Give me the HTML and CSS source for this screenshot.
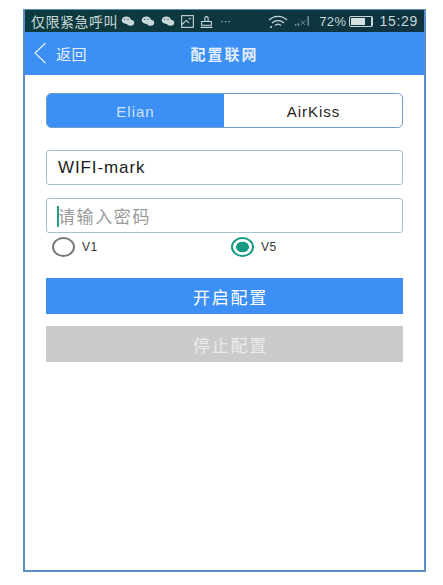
FILE: index.html
```html
<!DOCTYPE html>
<html lang="zh-CN">
<head>
    <meta charset="utf-8">
    <title>配置联网</title>
    <link rel="stylesheet" href="styles.css">
</head>
<body>
    <div class="phone">
        <div class="status-bar">
            <span class="carrier">仅限紧急呼叫</span>
            <div class="notify-icons">
                <svg class="wechat" viewBox="0 0 16 12"><ellipse cx="6" cy="5" rx="5.5" ry="4.5"/><ellipse cx="11" cy="8" rx="4.5" ry="3.6"/><circle cx="4" cy="4" r=".8" class="hole"/><circle cx="8" cy="4" r=".8" class="hole"/></svg>
                <svg class="wechat" viewBox="0 0 16 12"><ellipse cx="6" cy="5" rx="5.5" ry="4.5"/><ellipse cx="11" cy="8" rx="4.5" ry="3.6"/><circle cx="4" cy="4" r=".8" class="hole"/><circle cx="8" cy="4" r=".8" class="hole"/></svg>
                <svg class="wechat" viewBox="0 0 16 12"><ellipse cx="6" cy="5" rx="5.5" ry="4.5"/><ellipse cx="11" cy="8" rx="4.5" ry="3.6"/><circle cx="4" cy="4" r=".8" class="hole"/><circle cx="8" cy="4" r=".8" class="hole"/></svg>
                <svg class="line-icon" viewBox="0 0 12 12"><rect x=".6" y=".6" width="10.8" height="10.8"/><path d="M.6 9 5 5l2.5 2.5M7 3.5h2.5"/></svg>
                <svg class="line-icon" viewBox="0 0 12 12"><path d="M4.5 6V3a1.5 1.5 0 0 1 3 0v3M1.5 6h9v3.5h-9zM.5 11.4h11"/></svg>
                <span class="dots">···</span>
            </div>
            <div class="system-icons">
                <svg class="wifi" viewBox="0 0 20 13"><path d="M1 5a13 13 0 0 1 18 0M4 8a9 9 0 0 1 12 0M7 10.5a4.5 4.5 0 0 1 6 0"/><circle cx="3" cy="12" r="1"/></svg>
                <svg class="signal" viewBox="0 0 18 11"><rect x="0" y="9" width="1.6" height="2"/><rect x="3" y="8" width="1.6" height="3"/><path d="m6.5 5 5 5m0-5-5 5"/><rect x="14" y="0" width="1.6" height="11"/></svg>
                <span class="battery-text">72%</span>
                <div class="battery"><div class="battery-fill"></div></div>
                <span class="clock">15:29</span>
            </div>
        </div>

        <div class="app-bar">
            <div class="back">
                <svg class="back-arrow" viewBox="0 0 14 22"><path d="M12.5 1 2 11l10.5 10"/></svg>
                <span>返回</span>
            </div>
            <h1>配置联网</h1>
        </div>

        <div class="content">
            <div class="tabs">
                <div class="tab active">Elian</div>
                <div class="tab">AirKiss</div>
            </div>

            <div class="field ssid">WIFI-mark</div>
            <div class="field password"><span class="cursor"></span>请输入密码</div>

            <div class="versions">
                <label class="radio"><span class="circle"></span>V1</label>
                <label class="radio checked"><span class="circle"></span>V5</label>
            </div>

            <button class="btn start-btn">开启配置</button>
            <button class="btn stop-btn">停止配置</button>
        </div>
    </div>
</body>
</html>
```

FILE: styles.css
```css
* {
    box-sizing: border-box;
    margin: 0;
    padding: 0;
}

body {
    font-family: "Liberation Sans", "Noto Sans CJK SC", sans-serif;
    background: #fff;
    padding: 9px 0 0 23px;
}

.phone {
    width: 403px;
    height: 563px;
    border: 2px solid #5b8cc6;
    border-top-width: 1px;
    display: flex;
    flex-direction: column;
    background: #fff;
}

.status-bar {
    height: 22px;
    background: linear-gradient(90deg, #0c3b3f 0%, #0f3340 100%);
    color: #c9d8d8;
    font-size: 14px;
    display: flex;
    align-items: center;
    padding: 0 6px;
}

.carrier {
    width: 90px;
    letter-spacing: .5px;
    white-space: nowrap;
}

.notify-icons {
    display: flex;
    align-items: center;
    gap: 6px;
}

.wechat {
    width: 14px;
    height: 10px;
    fill: #c9d8d8;
}

.wechat .hole {
    fill: #0c3b3f;
}

.line-icon {
    width: 13px;
    height: 13px;
    fill: none;
    stroke: #c9d8d8;
    stroke-width: 1;
}

.dots {
    font-size: 11px;
    margin-left: 1px;
}

.system-icons {
    margin-left: auto;
    display: flex;
    align-items: center;
}

.wifi {
    width: 20px;
    height: 13px;
    fill: #c9d8d8;
    stroke: none;
    margin-right: 7px;
}

.wifi path {
    fill: none;
    stroke: #c9d8d8;
    stroke-width: 1.3;
}

.signal {
    width: 16px;
    height: 10px;
    fill: #7d9397;
    margin-right: 8px;
}

.signal path {
    stroke: #7d9397;
    fill: none;
}

.battery-text {
    font-size: 13px;
    letter-spacing: .4px;
}

.battery {
    width: 24px;
    height: 11px;
    border: 1px solid #c9d8d8;
    border-right-width: 2px;
    border-radius: 2px;
    padding: 1px;
    margin: 0 6px 0 3px;
}

.battery-fill {
    width: 72%;
    height: 100%;
    background: #d5e0e0;
}

.clock {
    font-size: 14px;
    letter-spacing: .7px;
}

.app-bar {
    height: 43px;
    background: #3b8ff5;
    color: #fff;
    position: relative;
    display: flex;
    align-items: center;
    justify-content: center;
}

.app-bar h1 {
    font-size: 15px;
    font-weight: 700;
    letter-spacing: 2px;
    color: #e4effd;
}

.back {
    position: absolute;
    left: 8px;
    top: 10px;
    display: flex;
    align-items: center;
    gap: 9px;
    font-size: 15px;
    letter-spacing: .5px;
    color: #e8f2fe;
}

.back-arrow {
    width: 14px;
    height: 22px;
    fill: none;
    stroke: #e8f2fe;
    stroke-width: 1.2;
}

.content {
    flex: 1;
    padding: 18px 21px 0 21px;
    display: flex;
    flex-direction: column;
}

.tabs {
    height: 35px;
    display: flex;
    border: 1px solid #6d9fc9;
    border-radius: 5px;
    overflow: hidden;
    margin-bottom: 22px;
}

.tab {
    flex: 1;
    display: flex;
    align-items: center;
    justify-content: center;
    padding-top: 1px;
    font-size: 15px;
    letter-spacing: 1px;
    color: #222;
}

.tab.active {
    background: #3b8ff5;
    color: #cfe3fb;
    margin-right: 1px;
}

.field {
    height: 35px;
    border: 1px solid #a3c3cc;
    border-radius: 3px;
    display: flex;
    align-items: center;
    padding-left: 11px;
    font-size: 16px;
    color: #1c1c1c;
}

.ssid {
    font-size: 17px;
    letter-spacing: .9px;
    padding-top: 1px;
    margin-bottom: 13px;
}

.password {
    position: relative;
    font-size: 17px;
    letter-spacing: 1.6px;
    color: #9a9a9a;
}

.cursor {
    position: absolute;
    left: 10px;
    top: 7px;
    width: 2px;
    height: 21px;
    background: #1f9e85;
}

.versions {
    display: flex;
    height: 45px;
    padding: 4px 0 0 6px;
}

.radio {
    flex: none;
    width: 179px;
    height: 20px;
    display: flex;
    align-items: center;
    gap: 7px;
    font-size: 12px;
    letter-spacing: .5px;
    color: #333;
}

.circle {
    width: 23px;
    height: 20px;
    border: 2px solid #777;
    border-radius: 50%;
    background: #fff;
}

.radio.checked .circle {
    border-color: #169a83;
    background: radial-gradient(ellipse at center, #169a83 0 45%, #fff 50%);
}

.btn {
    height: 36px;
    border: none;
    color: #fff;
    font-family: inherit;
    font-size: 17px;
    letter-spacing: 1.7px;
    padding-left: 12px;
}

.start-btn {
    background: #3b8ff5;
    margin-bottom: 12px;
}

.stop-btn {
    background: #cbcbcb;
    color: #ececec;
}
```
